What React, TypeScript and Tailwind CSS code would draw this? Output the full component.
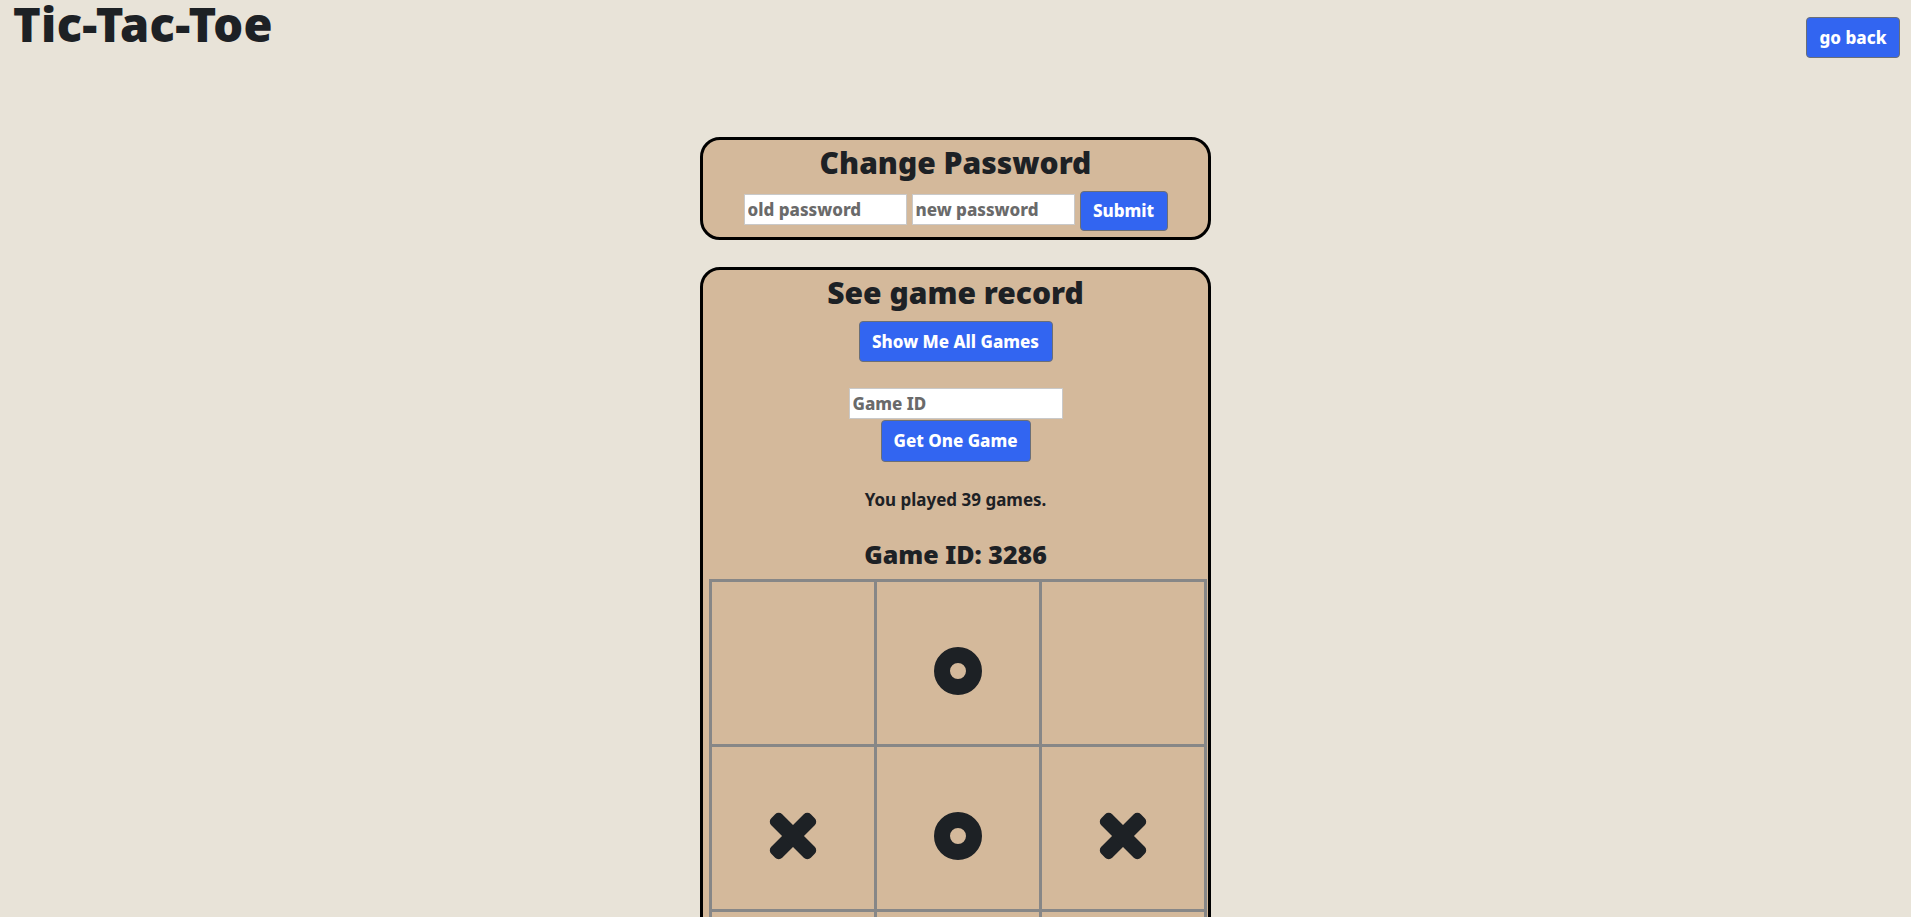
import React from "react";

const font = { fontFamily: '"Noto Sans", "DejaVu Sans", sans-serif' };

type Mark = "X" | "O" | "";

const board: Mark[] = ["", "O", "", "X", "O", "X", "X", "O", ""];

function OMark() {
  return (
    <svg width="48" height="48" viewBox="0 0 48 48">
      <circle cx="24" cy="24" r="16" fill="none" stroke="#1d2125" strokeWidth="16" />
    </svg>
  );
}

function XMark() {
  return (
    <svg width="50" height="50" viewBox="0 0 50 50">
      <g transform="rotate(45 25 25)" fill="#1d2125">
        <rect x="17.25" y="-3" width="15.5" height="56" rx="5" />
        <rect x="-3" y="17.25" width="56" height="15.5" rx="5" />
      </g>
    </svg>
  );
}

function BlueButton({ label, className }: { label: string; className: string }) {
  return (
    <button
      className={`bg-[#3265f1] text-white font-extrabold rounded-[4px] border border-[#6b6f76] flex items-center justify-center ${className}`}
    >
      {label}
    </button>
  );
}

function TextInput({ placeholder, className }: { placeholder: string; className: string }) {
  return (
    <input
      placeholder={placeholder}
      className={`bg-white border border-[#c9c9c9] px-[3px] text-[17px] font-extrabold text-[#555] placeholder:text-[#6a6a6a] outline-none ${className}`}
      style={font}
    />
  );
}

export default function App() {
  return (
    <div className="min-h-screen bg-[#e8e3d8] text-[#1d2125]" style={font}>
      <div className="flex justify-between items-start h-[60px]">
        <h1 className="text-[47px] font-black leading-[46px] pl-[13px] pt-[1px] tracking-[0.3px]">
          Tic-Tac-Toe
        </h1>
        <BlueButton label="go back" className="mt-[17px] mr-[11px] w-[94px] h-[41px] text-[17px]" />
      </div>

      <div className="flex flex-col items-center pt-[77px]">
        <section className="w-[511px] h-[103px] bg-[#d4b99b] border-[3px] border-black rounded-[20px] flex flex-col items-center">
          <h2 className="text-[30px] font-black leading-[40px] mt-[3px]">Change Password</h2>
          <div className="flex items-center gap-[5px] mt-[5px]">
            <TextInput placeholder="old password" className="w-[163px] h-[31px]" />
            <TextInput placeholder="new password" className="w-[163px] h-[31px]" />
            <BlueButton label="Submit" className="mt-[3px] w-[88px] h-[40px] text-[17px]" />
          </div>
        </section>

        <section className="mt-[27px] w-[511px] bg-[#d4b99b] border-[3px] border-black rounded-[20px] flex flex-col items-center pb-[20px]">
          <h2 className="text-[30px] font-black leading-[40px] mt-[3px]">See game record</h2>
          <BlueButton label="Show Me All Games" className="mt-[8px] w-[194px] h-[41px] text-[17px]" />
          <TextInput placeholder="Game ID" className="mt-[26px] w-[214px] h-[31px]" />
          <BlueButton label="Get One Game" className="mt-[1px] w-[150px] h-[42px] text-[17px]" />
          <p className="mt-[26px] text-[17px] font-bold leading-[24px]">You played 39 games.</p>
          <h3 className="mt-[26px] text-[25px] font-black leading-[32px]">Game ID: 3286</h3>
          <div className="self-start ml-[6px] mt-[9px] w-[498px] grid grid-cols-3 gap-[3px] p-[3px] bg-[#878787]">
            {board.map((m, i) => (
              <div key={i} className="h-[162px] bg-[#d4b99b] flex items-center justify-center pt-[16px]">
                {m === "O" ? <OMark /> : m === "X" ? <XMark /> : null}
              </div>
            ))}
          </div>
        </section>
      </div>
    </div>
  );
}
